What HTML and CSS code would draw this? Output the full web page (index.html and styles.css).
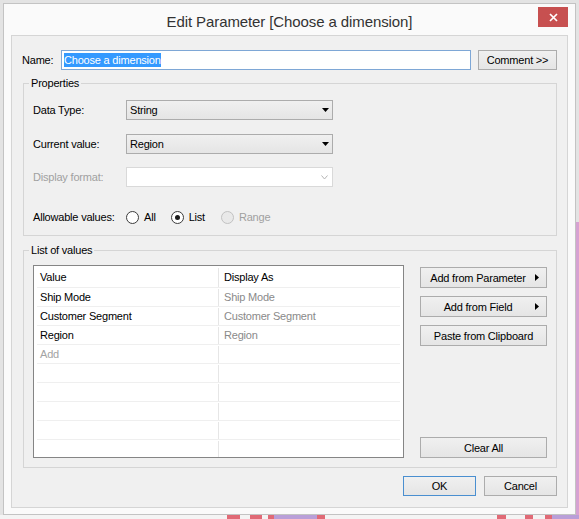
FILE: index.html
```html
<!DOCTYPE html>
<html lang="en">
<head>
<meta charset="utf-8">
<title>Edit Parameter</title>
<link rel="stylesheet" href="styles.css">
</head>
<body>
<div class="screen">
  <div class="window">
    <div class="titlebar">
      <span class="title">Edit Parameter [Choose a dimension]</span>
      <span class="close" aria-label="Close">
        <svg width="9" height="9" viewBox="0 0 9 9"><path d="M1 1 L8 8 M8 1 L1 8" stroke="#fff" stroke-width="1.7" fill="none"/></svg>
      </span>
    </div>
    <div class="client">
      <div class="name-row">
        <span class="name-label">Name:</span>
        <div class="textbox"><span class="selected">Choose a dimension</span></div>
        <button class="btn comment">Comment &gt;&gt;</button>
      </div>

      <div class="group props">
        <span class="group-title">Properties</span>
        <div class="prop-row r1">
          <span class="lbl">Data Type:</span>
          <div class="combo"><span>String</span>
            <svg class="tri" width="7" height="4" viewBox="0 0 7 4"><path d="M0 0 H7 L3.5 4 Z" fill="#000"/></svg>
          </div>
        </div>
        <div class="prop-row r2">
          <span class="lbl">Current value:</span>
          <div class="combo"><span>Region</span>
            <svg class="tri" width="7" height="4" viewBox="0 0 7 4"><path d="M0 0 H7 L3.5 4 Z" fill="#000"/></svg>
          </div>
        </div>
        <div class="prop-row r3">
          <span class="lbl disabled">Display format:</span>
          <div class="combo off"><span></span>
            <svg class="chev" width="7" height="5" viewBox="0 0 7 5"><path d="M0.5 0.5 L3.5 4 L6.5 0.5" stroke="#b5b5b5" stroke-width="1" fill="none"/></svg>
          </div>
        </div>
        <div class="prop-row r4">
          <span class="lbl">Allowable values:</span>
          <div class="radios">
            <span class="radio-item opt-all"><span class="radio"></span><span>All</span></span>
            <span class="radio-item opt-list"><span class="radio on"></span><span>List</span></span>
            <span class="radio-item opt-range"><span class="radio off"></span><span class="disabled">Range</span></span>
          </div>
        </div>
      </div>

      <div class="group values">
        <span class="group-title">List of values</span>
        <div class="values-body">
          <div class="value-table">
            <div class="lrow head"><div class="c1">Value</div><div class="c2">Display As</div></div>
            <div class="lrow"><div class="c1">Ship Mode</div><div class="c2 dim">Ship Mode</div></div>
            <div class="lrow"><div class="c1">Customer Segment</div><div class="c2 dim">Customer Segment</div></div>
            <div class="lrow"><div class="c1">Region</div><div class="c2 dim">Region</div></div>
            <div class="lrow"><div class="c1 add">Add</div><div class="c2"></div></div>
            <div class="lrow"><div class="c1"></div><div class="c2"></div></div>
            <div class="lrow"><div class="c1"></div><div class="c2"></div></div>
            <div class="lrow"><div class="c1"></div><div class="c2"></div></div>
            <div class="lrow"><div class="c1"></div><div class="c2"></div></div>
            <div class="lrow last"><div class="c1"></div><div class="c2"></div></div>
          </div>
          <div class="side">
            <button class="btn side-btn menu"><span class="txt">Add from Parameter</span>
              <svg width="4" height="7" viewBox="0 0 4 7"><path d="M0 0 L4 3.5 L0 7 Z" fill="#000"/></svg></button>
            <button class="btn side-btn menu"><span class="txt">Add from Field</span>
              <svg width="4" height="7" viewBox="0 0 4 7"><path d="M0 0 L4 3.5 L0 7 Z" fill="#000"/></svg></button>
            <button class="btn side-btn">Paste from Clipboard</button>
            <button class="btn side-btn clear">Clear All</button>
          </div>
        </div>
      </div>

      <div class="dialog-buttons">
        <button class="btn ok">OK</button>
        <button class="btn cancel">Cancel</button>
      </div>
    </div>
  </div>

  <div class="desk-right"></div>
  <div class="desk-bottom">
    <span class="gap" style="width:227px"></span>
    <span class="red" style="width:13px"></span>
    <span class="gap" style="width:10px"></span>
    <span class="red" style="width:12px"></span>
    <span class="gap" style="width:6px"></span>
    <span class="red" style="width:6px"></span>
    <span class="purple" style="width:43px"></span>
    <span class="red" style="width:8px"></span>
    <span class="gap" style="width:172px"></span>
    <span class="red" style="width:9px"></span>
    <span class="gap" style="width:19px"></span>
    <span class="red" style="width:8px"></span>
    <span class="gap" style="width:12px"></span>
    <span class="red" style="width:7px"></span>
    <span class="purple" style="width:27px"></span>
  </div>
</div>
</body>
</html>
```

FILE: styles.css
```css
* { box-sizing: border-box; }

html, body {
  margin: 0;
  padding: 0;
}

body {
  width: 579px;
  height: 519px;
  overflow: hidden;
  background: #e3e3e3;
  font-family: "Liberation Sans", Arial, sans-serif;
  font-size: 11px;
  letter-spacing: -0.2px;
  color: #000;
}

.screen {
  position: relative;
  width: 579px;
  height: 519px;
  padding: 3px 0 0 3px;
  overflow: hidden;
}

/* ---------- window frame ---------- */
.window {
  position: relative;
  z-index: 1;
  width: 573px;
  height: 512px;
  border: 1px solid #c3c3c3;
  background: #fafafa;
  padding: 0 7px 6px 7px;
  display: flex;
  flex-direction: column;
}

.titlebar {
  height: 31px;
  flex: none;
  display: grid;
  grid-template-columns: 1fr auto 1fr;
  align-items: start;
}

.title {
  grid-column: 2;
  padding-top: 9px;
  font-size: 15px;
  line-height: 18px;
  letter-spacing: -0.1px;
  color: #333;
  white-space: nowrap;
}

.close {
  grid-column: 3;
  justify-self: end;
  margin-top: 3px;
  width: 30px;
  height: 20px;
  background: #c75050;
  display: flex;
  align-items: center;
  justify-content: center;
}

.close svg { display: block; }

.client {
  flex: 1;
  border: 1px solid #d5d5d5;
  background: #f0f0f0;
  padding: 14px 10px 10px 10px;
  display: flex;
  flex-direction: column;
}

/* ---------- controls ---------- */
.btn {
  font: inherit;
  letter-spacing: inherit;
  color: #000;
  margin: 0;
  padding: 0;
  border: 1px solid #acacac;
  border-radius: 0;
  background: linear-gradient(#f0f0f0, #e5e5e5);
  line-height: 14px;
  text-align: center;
  white-space: nowrap;
}

.name-row {
  height: 20px;
  display: flex;
  align-items: center;
  line-height: 14px;
}

.name-label {
  width: 39px;
  flex: none;
}

.textbox {
  width: 410px;
  height: 20px;
  flex: none;
  border: 1px solid #7ea7d6;
  background: #fff;
  padding: 2px 0 0 2px;
}

.selected {
  display: inline-block;
  background: #3399ff;
  color: #fff;
  line-height: 14px;
  height: 14px;
}

.comment {
  margin-left: 7px;
  width: 79px;
  height: 20px;
}

/* ---------- group boxes ---------- */
.group {
  position: relative;
  margin-left: 1px;
  border: 1px solid #d5d5d5;
}

.group-title {
  position: absolute;
  top: -7px;
  left: 5px;
  padding: 0 2px;
  line-height: 13px;
  background: #f0f0f0;
}

.props {
  margin-top: 13px;
  padding: 16px 10px 9px 9px;
}

.prop-row {
  display: grid;
  grid-template-columns: 93px 207px;
  align-items: center;
  height: 20px;
  line-height: 14px;
}

.prop-row.r1 { margin-bottom: 14px; }
.prop-row.r2 { margin-bottom: 13px; }
.prop-row.r3 { margin-bottom: 21px; }
.prop-row.r4 { height: 18px; }

.disabled { color: #a0a0a0; }

.combo {
  height: 20px;
  border: 1px solid #acacac;
  background: linear-gradient(#f0f0f0, #e5e5e5);
  display: flex;
  align-items: center;
  justify-content: space-between;
  padding: 0 3px 0 3px;
}

.combo.off {
  background: #fff;
  border-color: #d9d9d9;
  padding-right: 4px;
}

.combo svg { display: block; }

.radios {
  display: flex;
  align-items: center;
}

.radio-item {
  display: inline-flex;
  align-items: center;
  gap: 5px;
}

.radio-item.opt-all { margin-right: 15px; }
.radio-item.opt-list { margin-right: 16px; }

.radio {
  width: 13px;
  height: 13px;
  flex: none;
  border-radius: 50%;
  border: 1px solid #3c3c3c;
  background: #fff;
  display: flex;
  align-items: center;
  justify-content: center;
}

.radio.on::after {
  content: "";
  width: 5px;
  height: 5px;
  border-radius: 50%;
  background: #1a1a1a;
}

.radio.off {
  border-color: #c2c2c2;
  background: #e9e9e9;
}

/* ---------- list of values ---------- */
.values {
  margin-top: 14px;
  padding: 14px 9px 9px 9px;
}

.values-body {
  display: flex;
  height: 193px;
}

.value-table {
  width: 371px;
  height: 193px;
  flex: none;
  border: 1px solid #858585;
  background: #fff;
  padding: 0 3px;
  overflow: hidden;
}

.lrow {
  display: flex;
  height: 19px;
  padding-top: 1px;
  border-bottom: 1px solid #efefef;
  line-height: 17px;
}

.lrow.head { height: 22px; padding-top: 2px; line-height: 19px; }
.lrow.last { border-bottom: 0; }

.c1 {
  width: 182px;
  flex: none;
  padding-left: 3px;
  border-right: 1px solid #e6e6e6;
  white-space: nowrap;
}

.c2 {
  flex: 1;
  padding-left: 5px;
  white-space: nowrap;
}

.dim { color: #8a8a8a; }
.add { color: #a3a3a3; }

.side {
  margin-left: auto;
  width: 127px;
  display: flex;
  flex-direction: column;
  padding-top: 2px;
}

.side-btn {
  height: 21px;
  width: 127px;
  margin-bottom: 8px;
}

.side-btn.menu {
  display: grid;
  grid-template-columns: 1fr auto;
  align-items: center;
  padding-right: 7px;
}

.side-btn.menu .txt { text-align: center; }
.side-btn.menu svg { display: block; }

.side-btn.clear {
  margin-top: auto;
  margin-bottom: 0;
  height: 21px;
}

/* ---------- dialog buttons ---------- */
.dialog-buttons {
  margin-top: 8px;
  display: flex;
  justify-content: flex-end;
  gap: 8px;
}

.dialog-buttons .btn {
  width: 73px;
  height: 20px;
}

.btn.ok { border-color: #4a8fd0; }

/* ---------- desktop behind the dialog ---------- */
.desk-right {
  position: absolute;
  right: 0;
  top: 222px;
  bottom: 0;
  width: 3px;
  background: #d6a2d2;
}

.desk-bottom {
  position: absolute;
  left: 0;
  bottom: 0;
  width: 579px;
  height: 4px;
  display: flex;
  background: #f4f4f4;
}

.desk-bottom span { height: 4px; flex: none; }
.desk-bottom .red { background: #e06a76; }
.desk-bottom .purple { background: #b99fd8; }
```
